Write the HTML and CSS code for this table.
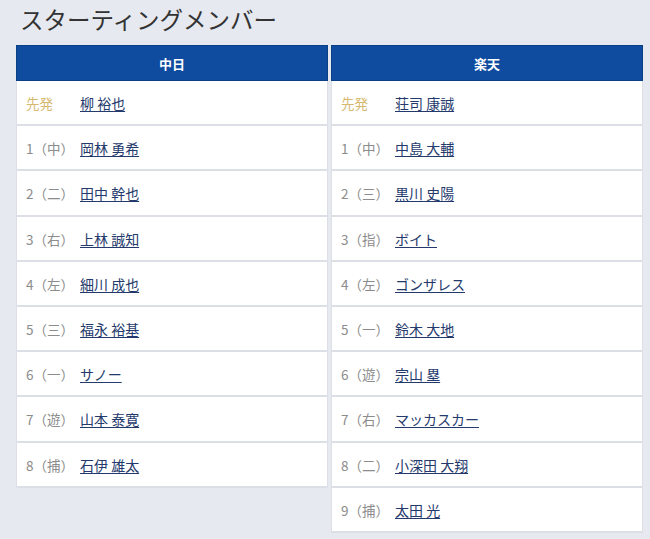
FILE: index.html
```html
<!DOCTYPE html>
<html lang="ja">
<head>
<meta charset="utf-8">
<link rel="stylesheet" href="styles.css">
</head>
<body>
<h1 class="title">スターティングメンバー</h1>
<div class="tables">
  <div class="team">
    <div class="team-head">中日</div>
    <div class="row"><span class="pos starter">先発</span><a class="name" href="#">柳 裕也</a></div>
    <div class="row"><span class="pos">1（中）</span><a class="name" href="#">岡林 勇希</a></div>
    <div class="row"><span class="pos">2（二）</span><a class="name" href="#">田中 幹也</a></div>
    <div class="row"><span class="pos">3（右）</span><a class="name" href="#">上林 誠知</a></div>
    <div class="row"><span class="pos">4（左）</span><a class="name" href="#">細川 成也</a></div>
    <div class="row"><span class="pos">5（三）</span><a class="name" href="#">福永 裕基</a></div>
    <div class="row"><span class="pos">6（一）</span><a class="name" href="#">サノー</a></div>
    <div class="row"><span class="pos">7（遊）</span><a class="name" href="#">山本 泰寛</a></div>
    <div class="row"><span class="pos">8（捕）</span><a class="name" href="#">石伊 雄太</a></div>
  </div>
  <div class="team">
    <div class="team-head">楽天</div>
    <div class="row"><span class="pos starter">先発</span><a class="name" href="#">荘司 康誠</a></div>
    <div class="row"><span class="pos">1（中）</span><a class="name" href="#">中島 大輔</a></div>
    <div class="row"><span class="pos">2（三）</span><a class="name" href="#">黒川 史陽</a></div>
    <div class="row"><span class="pos">3（指）</span><a class="name" href="#">ボイト</a></div>
    <div class="row"><span class="pos">4（左）</span><a class="name" href="#">ゴンザレス</a></div>
    <div class="row"><span class="pos">5（一）</span><a class="name" href="#">鈴木 大地</a></div>
    <div class="row"><span class="pos">6（遊）</span><a class="name" href="#">宗山 塁</a></div>
    <div class="row"><span class="pos">7（右）</span><a class="name" href="#">マッカスカー</a></div>
    <div class="row"><span class="pos">8（二）</span><a class="name" href="#">小深田 大翔</a></div>
    <div class="row"><span class="pos">9（捕）</span><a class="name" href="#">太田 光</a></div>
  </div>
</div>
</body>
</html>
```
FILE: styles.css
```css
html, body {
  margin: 0;
  padding: 0;
}
body {
  background: #e6e9ef;
  font-family: "Noto Sans CJK JP", "Noto Sans", sans-serif;
  color: #333;
}
.title {
  margin: 0;
  padding: 1px 0 0 20px;
  height: 44px;
  box-sizing: border-box;
  font-size: 23.5px;
  line-height: 36px;
  font-weight: 400;
  color: #333;
}
.tables {
  display: flex;
  align-items: flex-start;
  gap: 3px;
  padding: 1px 7px 0 16px;
}
.team {
  width: 312px;
  flex: none;
}
.team-head {
  height: 36px;
  box-sizing: border-box;
  background: #0f4c9f;
  border: 1px solid #0b3f86;
  color: #fff;
  font-weight: 700;
  font-size: 13px;
  display: flex;
  align-items: center;
  justify-content: center;
}
.row {
  height: 45.2px;
  box-sizing: border-box;
  background: #fff;
  border-left: 1px solid #dcdfe5;
  border-right: 1px solid #dcdfe5;
  border-bottom: 2px solid #dcdfe5;
  display: flex;
  align-items: center;
  padding-top: 1px;
}
.pos {
  width: 63px;
  flex: none;
  box-sizing: border-box;
  padding-left: 9px;
  font-size: 13.5px;
  color: #8c8c8c;
  white-space: nowrap;
}
.pos.starter {
  color: #d6b86f;
  font-size: 13.5px;
}
.name {
  font-size: 14px;
  color: #253a6c;
  text-decoration: underline;
  text-underline-offset: 2px;
}
```
